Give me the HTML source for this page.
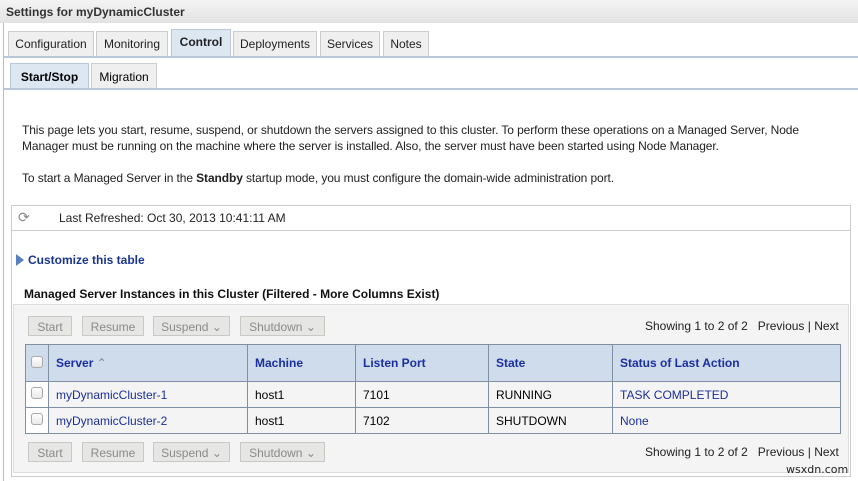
<!DOCTYPE html>
<html><head><style>
*{box-sizing:border-box;margin:0;padding:0}
body{width:858px;height:481px;overflow:hidden;background:#fff;font-family:"Liberation Sans",sans-serif;font-size:12px;color:#000;position:relative}
.a{position:absolute;white-space:nowrap}
.title{left:0;top:0;width:858px;height:23px;background:linear-gradient(#f4f4f4,#e2e2e2);font-weight:bold;font-size:12px;padding:5px 0 0 6px;color:#333}
.tab{position:absolute;top:31px;height:26px;background:#efefef;border:1px solid #ccc;border-bottom:none;font-size:12px;text-align:center;padding-top:5px;color:#222}
.tab.on{background:#dce7f2;font-weight:bold;border-color:#b8c8da}
.st{position:absolute;top:63px;height:26px;background:#efefef;border:1px solid #ccc;border-bottom:none;font-size:12px;text-align:center;padding-top:6px}
.st.on{background:#dce7f2;font-weight:bold;border-color:#b8c8da}
.hl{position:absolute;left:3px;width:855px;height:2px;background:#b9c8d8}
.btn{position:absolute;height:20px;background:#e6e6e4;border:1px solid #c8c8c4;color:#8a8a8a;font-size:12px;text-align:center;padding-top:3px}
table{position:absolute;left:25px;top:344px;width:816px;border-collapse:collapse}
td,th{border:1px solid #7f90a2;text-align:left;padding-left:7px;font-size:12px}
th{background:#cfdcec;height:37px;color:#1a2fa0;font-weight:bold}
td{height:26px}
.lk{color:#1a2f9a}
.cb{display:inline-block;width:12px;height:12px;border:1px solid #aaa;border-radius:3px;background:linear-gradient(#fff,#e8e8e8)}
</style></head><body>
<div class="a title">Settings for myDynamicCluster</div>
<div class="a" style="left:3px;top:23px;width:1px;height:458px;background:#bbb"></div>
<div class="tab" style="left:8px;width:86px">Configuration</div>
<div class="tab" style="left:96px;width:72px">Monitoring</div>
<div class="tab on" style="left:171px;width:60px;top:29px;height:28px">Control</div>
<div class="tab" style="left:233px;width:84px">Deployments</div>
<div class="tab" style="left:320px;width:60px">Services</div>
<div class="tab" style="left:383px;width:46px">Notes</div>
<div class="hl" style="top:56px"></div>
<div class="st on" style="left:10px;width:79px">Start/Stop</div>
<div class="st" style="left:91px;width:66px">Migration</div>
<div class="hl" style="top:88px"></div>
<div class="a" style="left:22px;top:122px;line-height:16px;font-size:12px;color:#222;letter-spacing:-0.1px">This page lets you start, resume, suspend, or shutdown the servers assigned to this cluster. To perform these operations on a Managed Server, Node<br>Manager must be running on the machine where the server is installed. Also, the server must have been started using Node Manager.</div>
<div class="a" style="left:22px;top:171px;font-size:12px;color:#222;letter-spacing:-0.1px">To start a Managed Server in the <b>Standby</b> startup mode, you must configure the domain-wide administration port.</div>
<div class="a" style="left:11px;top:205px;width:840px;height:26px;border:1px solid #ccc"></div>
<div class="a" style="left:18px;top:209px;color:#888;font-size:14px">⟳</div>
<div class="a" style="left:59px;top:211px;color:#222">Last Refreshed: Oct 30, 2013 10:41:11 AM</div>
<div class="a" style="left:11px;top:230px;width:840px;height:247px;border:1px solid #ccc;border-top:none"></div>
<div class="a" style="left:16px;top:254px;width:0;height:0;border-left:8px solid #5a7fc0;border-top:6px solid transparent;border-bottom:6px solid transparent"></div>
<div class="a" style="left:28px;top:253px;font-weight:bold;color:#1a3590">Customize this table</div>
<div class="a" style="left:24px;top:287px;font-weight:bold;color:#111">Managed Server Instances in this Cluster (Filtered - More Columns Exist)</div>
<div class="a" style="left:13px;top:304px;width:836px;height:169px;background:#f4f4f4;border:1px solid #ddd"></div>
<div class="btn" style="left:28px;top:316px;width:44px">Start</div>
<div class="btn" style="left:82px;top:316px;width:62px">Resume</div>
<div class="btn" style="left:153px;top:316px;width:77px">Suspend ⌄</div>
<div class="btn" style="left:240px;top:316px;width:85px">Shutdown ⌄</div>
<div class="a" style="left:645px;top:319px;color:#222">Showing 1 to 2 of 2 &nbsp; Previous | Next</div>
<table>
<tr><th style="width:23px;padding-left:5px"><span class="cb"></span></th><th style="width:199px">Server <span style="color:#888;font-weight:normal">⌃</span></th><th style="width:108px">Machine</th><th style="width:133px">Listen Port</th><th style="width:124px">State</th><th>Status of Last Action</th></tr>
<tr><td style="padding-left:5px;background:#fff"><span class="cb"></span></td><td class="lk">myDynamicCluster-1</td><td>host1</td><td>7101</td><td>RUNNING</td><td class="lk">TASK COMPLETED</td></tr>
<tr><td style="padding-left:5px;background:#fff"><span class="cb"></span></td><td class="lk">myDynamicCluster-2</td><td>host1</td><td>7102</td><td>SHUTDOWN</td><td class="lk">None</td></tr>
</table>
<div class="btn" style="left:28px;top:442px;width:44px">Start</div>
<div class="btn" style="left:82px;top:442px;width:62px">Resume</div>
<div class="btn" style="left:153px;top:442px;width:77px">Suspend ⌄</div>
<div class="btn" style="left:240px;top:442px;width:85px">Shutdown ⌄</div>
<div class="a" style="left:645px;top:445px;color:#222">Showing 1 to 2 of 2 &nbsp; Previous | Next</div>
<div class="a" style="left:786px;top:463px;font-family:'DejaVu Sans',sans-serif;font-size:11px;color:#222">wsxdn.com</div>
</body></html>
